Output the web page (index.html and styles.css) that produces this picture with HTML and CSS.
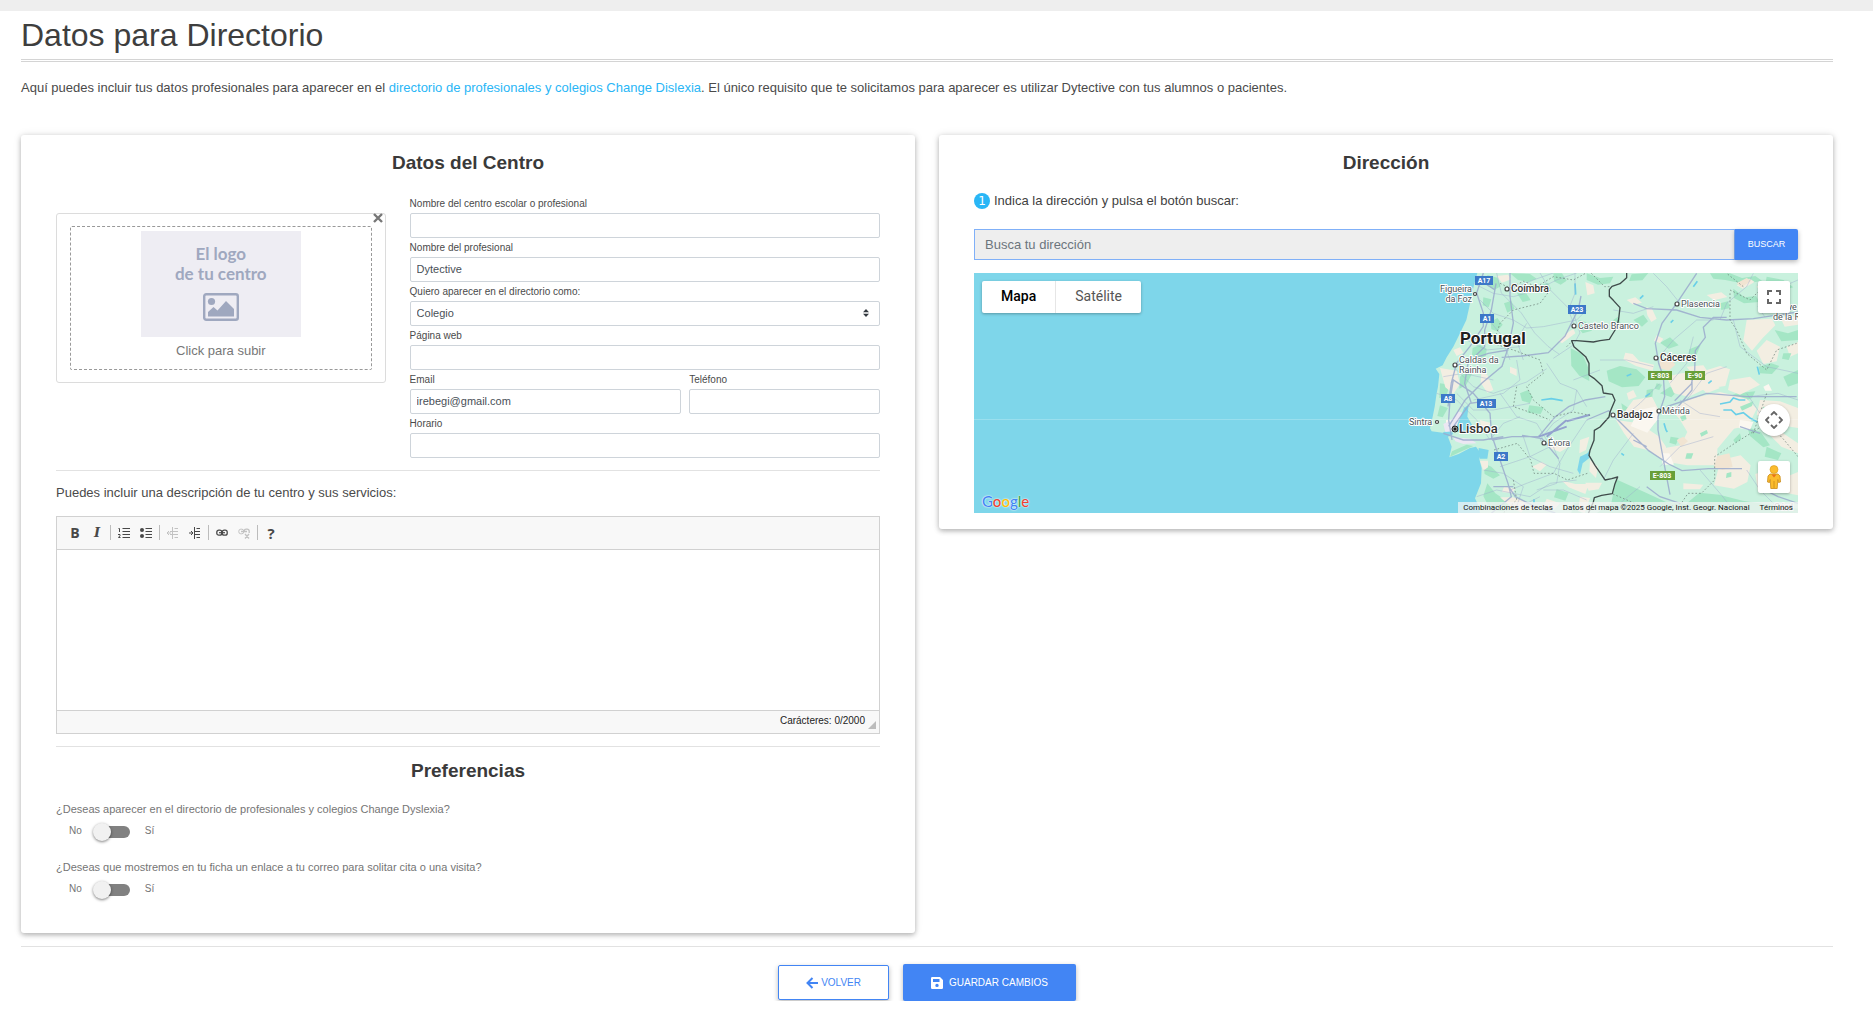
FILE: index.html
```html
<!DOCTYPE html>
<html lang="es">
<head>
<meta charset="utf-8">
<meta name="viewport" content="width=device-width, initial-scale=1">
<title>Datos para Directorio</title>
<link rel="stylesheet" href="styles.css">
</head>
<body>
<div class="topbar"></div>
<main class="page">
  <h1 class="page-title">Datos para Directorio</h1>
  <p class="intro">Aquí puedes incluir tus datos profesionales para aparecer en el <a href="#">directorio de profesionales y colegios Change Dislexia</a>. El único requisito que te solicitamos para aparecer es utilizar Dytective con tus alumnos o pacientes.</p>

  <div class="cards">
    <section class="card card-center">
      <h2 class="card-title">Datos del Centro</h2>
      <div class="center-grid">
        <div class="logo-box">
          <button type="button" class="logo-clear" aria-label="Quitar logo">
            <svg width="10" height="10" viewBox="0 0 10 10"><path d="M1 1l8 8M9 1l-8 8" stroke="#777" stroke-width="2.4"/></svg>
          </button>
          <button type="button" class="logo-drop">
            <span class="logo-image">
              <span>El logo</span>
              <span>de tu centro</span>
              <svg class="logo-icon" width="36" height="28" viewBox="0 0 36 28"><rect x="1.2" y="1.2" width="33.6" height="25.6" rx="2" fill="none" stroke="#9fa8bf" stroke-width="2.4"/><circle cx="8.5" cy="8.5" r="3.6" fill="#9fa8bf"/><path d="M5 23.500v-4.500l5.500-5 4 3.500L23 8l8 8v7.500z" fill="#9fa8bf"/></svg>
            </span>
            <span class="logo-text">Click para subir</span>
          </button>
        </div>
        <div class="fields">
          <div class="field"><label for="centro">Nombre del centro escolar o profesional</label><input id="centro" type="text"></div>
          <div class="field"><label for="profesional">Nombre del profesional</label><input id="profesional" type="text" value="Dytective"></div>
          <div class="field"><label for="tipo">Quiero aparecer en el directorio como:</label>
            <div class="select-wrap"><select id="tipo"><option>Colegio</option><option>Profesional</option></select>
            <svg class="select-arrow" width="6" height="8" viewBox="0 0 6 8"><path d="M0 3.200L3 0l3 3.200zM0 4.800L3 8l3-3.200z" fill="#343a40"/></svg></div></div>
          <div class="field"><label for="web">Página web</label><input id="web" type="text"></div>
          <div class="field-pair">
            <div class="field"><label for="email">Email</label><input id="email" type="text" value="irebegi@gmail.com"></div>
            <div class="field"><label for="telefono">Teléfono</label><input id="telefono" type="text"></div>
          </div>
          <div class="field"><label for="horario">Horario</label><input id="horario" type="text"></div>
        </div>
      </div>
      <hr>
      <label class="editor-label" for="descripcion">Puedes incluir una descripción de tu centro y sus servicios:</label>
      <div class="editor">
        <div class="toolbar">
          <button type="button" class="tool bold" aria-label="Negrita">B</button>
          <button type="button" class="tool italic" aria-label="Cursiva">I</button>
          <span class="sep"></span>
          <button type="button" class="tool" aria-label="Lista numerada"><svg width="12" height="12" viewBox="0 0 12 12" fill="none" stroke="#484848"><path d="M4.500 1.500H12M4.500 4.500H12M4.500 7.500H12M4.500 10.500H12" stroke-width="1"/><path d="M.5 1.500h1V5M0 7.500h2v1.200L.5 10.500H2.500"/></svg></button>
          <button type="button" class="tool" aria-label="Lista de viñetas"><svg width="12" height="12" viewBox="0 0 12 12"><circle cx="2" cy="3" r="2" fill="#484848"/><circle cx="2" cy="9" r="2" fill="#484848"/><path d="M5.500 1.500H12M5.500 4.500H12M5.500 7.500H12M5.500 10.500H12" stroke="#484848"/></svg></button>
          <span class="sep"></span>
          <button type="button" class="tool" disabled aria-label="Reducir sangría"><svg width="12" height="12" viewBox="0 0 12 12" fill="none" stroke="#484848"><path d="M5.500 0v12M7.500 1.500h3.500M3 4.500h8M3 7.500h8M7.500 10.500h3.500M0 6h4M2 4L0 6l2 2"/></svg></button>
          <button type="button" class="tool" aria-label="Aumentar sangría"><svg width="12" height="12" viewBox="0 0 12 12" fill="none" stroke="#484848"><path d="M5.500 0v12M7.500 1.500h3.500M6 4.500h5M6 7.500h5M7.500 10.500h3.500M0 6h4M2 4l2 2-2 2"/></svg></button>
          <span class="sep"></span>
          <button type="button" class="tool" aria-label="Insertar enlace"><svg width="12" height="8" viewBox="0 0 12 8" fill="none" stroke="#484848"><rect x=".8" y="1.200" width="5" height="5" rx="2" stroke-width="1.300"/><rect x="6.200" y="1.200" width="5" height="5" rx="2" stroke-width="1.300"/><path d="M3 3.700h6" stroke-width="1.200"/></svg></button>
          <button type="button" class="tool" disabled aria-label="Quitar enlace"><svg width="12" height="12" viewBox="0 0 12 12" fill="none" stroke="#484848"><rect x=".8" y="2.200" width="5" height="4.600" rx="2"/><path d="M6.200 5V4a2 2 0 0 1 2-1.800h1a2 2 0 0 1 2 2V6M3 4.500h6M7 7l4 4.500M11 7l-4 4.500" stroke-width="1.300"/></svg></button>
          <span class="sep"></span>
          <button type="button" class="tool help" aria-label="Ayuda">?</button>
        </div>
        <textarea id="descripcion"></textarea>
        <div class="editor-foot"><span>Carácteres: 0/2000</span><svg width="8" height="8" viewBox="0 0 8 8"><path d="M8 0v8H0z" fill="#bcbcbc"/></svg></div>
      </div>
      <hr>
      <h2 class="card-title">Preferencias</h2>
      <p class="question">¿Deseas aparecer en el directorio de profesionales y colegios Change Dyslexia?</p>
      <label class="switch"><span>No</span><input type="checkbox"><span>Sí</span></label>
      <p class="question">¿Deseas que mostremos en tu ficha un enlace a tu correo para solitar cita o una visita?</p>
      <label class="switch"><span>No</span><input type="checkbox"><span>Sí</span></label>
    </section>

    <section class="card card-address">
      <h2 class="card-title">Dirección</h2>
      <label class="step" for="direccion"><span class="step-number">1</span>Indica la dirección y pulsa el botón buscar:</label>
      <div class="search">
        <input id="direccion" type="text" placeholder="Busca tu dirección">
        <button type="button">BUSCAR</button>
      </div>
      <div class="map">
        <svg class="map-canvas" viewBox="0 0 824 240" preserveAspectRatio="xMaxYMid slice" role="img" aria-label="Mapa de Portugal">
          <rect width="824" height="240" fill="#7ed6ea"/>
          <g transform="translate(426 -53) scale(.33333)">
            <path fill="#c9f1de" d="M232 159L222 195 215 225 208 260 199 300 180 340 160 380 140 412 128 436 107 446 118 462 114 500 110 520 104 560 98 590 90 625 95 634 128 638 150 628 160 642 144 650 155 680 148 712 176 702 210 684 228 680 242 700 238 718 245 745 243 790 225 835 236 858 240 879H1194V159z"/>
            <g fill="#a4e6c5">
              <path d="M262 165l30 8 10 26-18 10-22-12zM330 160l60 2 20 14-26 10-30-6zM420 196l24-8 10 18-20 10zM250 232l24 6-8 24-18-6zM272 306l20-12 16 20-16 20-18-6zM218 384l22-10 20 12-2 22-24 10-18-14zM312 250l22-8 10 24-22 12zM180 470l22-20 14 12-18 34-20 10zM350 218l30 4 12 18-24 6zM460 160l26 0 14 22-18 12-20-10z"/>
              <path d="M512 385l36 18 18 44 2 36-30-16-24-30zM620 452l40-14 50 10 26 24-20 26-50 4-40-18zM560 160l40 14 40-4-10 20-36 4-34-14zM695 163l50-4-18 22-40 2zM700 300l30-16 14 20-18 16zM780 368l30-16 26 24-30 10zM640 300l14-10 10 26-20 10zM536 300l22 6 18 26-28 8-16-20zM868 388l34-14-14 34-24 4z"/>
              <path d="M930 160l60 0 36 14 40-6 20 14-50 10-60-12-36-4zM1000 206l34 26 34-4 10 18-46 4-30-16zM1100 170l50 10 30 22-40 12-44-22zM1124 330l40 10 30-10v30l-50 4zM1076 440l38-10 24 8-22 24-36-2zM960 250l24-6 6 20-26 6zM780 520l30-20 26 10-22 22zM1150 470l44-20v40l-30 10z"/>
              <path d="M648 778l40 18 50 22 60 28 60 6 40-34 60 6 70 18 90 14 76 10v13H590l44-30zM960 540l50-20 56-6-10 20-50 20-40 10zM360 520l24-10 14 20-8 20-24-8zM388 556l44 6-10 20-40-4zM250 730l24 10 26 26-20 10-26-14zM262 790l24 30 44 30-20 24-40-6-20-40zM470 808l36 10-10 24-34-10zM520 850l30-4-6 33h-30zM664 550l30 20 0 24-24-10zM812 650l24 4-8 20-20-6zM1042 620l40 16 28 40-20 6-40-34zM1100 680l44 20-10 20-40-10zM740 510l20-4-4 30-18 4zM156 694l44-20 20 4-40 18-30 14zM120 490l30 4-12 36-20 4zM120 556l24 8-16 28-16-4z"/>
            </g>
            <g fill="#f3eee2">
              <path d="M290 168l34-4 10 14-28 10zM556 186l24 10 4 24-22 6zM680 240l26-8 20 16-26 6zM738 262l18 4 14 30-16 10-12-20zM676 398l22 4 20 22 44 10-4 18-50-14-38-20zM770 346l20 10-10 14-18-8zM800 470l44-10 70-8 46-14 30 10-14 50-60 8-50 24-44-10zM860 440l50-4 14 20-44 10zM920 225l44-8 18 14-40 10zM1010 196l40-20 14 10-36 20zM1040 300l76-4 10 20-40 40-30 36-26-30zM1140 290l54 0v24l-40 6zM1100 360l40 20-10 44-40 8-20-40zM1160 380l34-14v34l-24 10zM990 480l60-10 30 24-60 30-36-14zM1070 200l20-14 8 20-16 6zM500 340l20-14 6 14-40 30-10-8zM160 390l20-8 10 16-20 10zM244 458l18 6 18 46-18 8-20-30zM330 440l20 8 0 20-20-10zM120 444l50 8 10 40-20 30-24-20z"/>
              <path d="M648 600l70 10 60 40 20 30-6 40-50-30-40-10-30-40zM700 540l56-10 20 40-10 40-60-14-30-24zM812 566l60-30 88-20 80 20 30 30-24 50-44 10-50 60 0 50-90 0-60-10-20-40 60-10 20-40-24-40zM900 500l40-10 20 14-40 16zM1080 540l60 4 54 20v60l-64-10-60-30zM962 720l60-14 30 30-10 50-40 20-60-10zM1066 762l44-16 60 20 24-10v70l-70-14-50 4zM1120 620l74 50v30l-50-20-40-40zM850 790l60 4-10 14-50 0zM240 722l24 0 0 20-14 10zM396 740l30-14 14 8-20 20zM440 680l24-8 40 10-24 14zM540 660l28-10-10 40-20 10zM486 782l40 10 40 0-10 30-50-20zM300 832l40 0 44 16-20 30-34-20zM440 836l40 14-20 20-30-10zM570 720l24 20-6 34-20-20zM680 520l20-10 10 20-24 10zM540 830l30 4-16 45-20-6zM556 788l50 0-10 20-30 4zM312 800l34 6-10 14-30-4zM240 600l30 8-4 20-24-8z"/>
            </g>
            <g fill="#f1e4d2"><path d="M780 420l30-6 16 20-20 18-28-8zM952 708l36-8 10 40-30 10-26-8zM830 660l20-10 14 14-20 16zM1010 190l30-16 14 8-30 20z"/></g>
            <g fill="#fbf7f0"><path d="M716 570l50-10 10 34-34 44-50-20zM784 700l24 0 14 34-34 0zM1090 500l16-8 10 20-20 0zM1020 600l40 6-10 24-34-6zM138 600l30 0 10 28-40 4zM1128 262l30 0 0 14-26 4z"/></g>
            <g fill="#a4e6c5"><path d="M840 590l16-6 4 14-14 6zM900 640l20-10 4 10-20 10zM1020 560l40-16-4 14-30 14zM770 490l16 4-8 16-14-4zM1000 660l20-20 4 16-18 14zM1150 400l24 0-8 20-20-4zM860 700l20 0-6 16-18 0zM980 760l14-4 0 14-16 4zM1090 560l30 4-10 14-24-6z"/></g>
            <g fill="#ece7f3"><path d="M130 612l24-12 20-26 12 4-10 26-16 30-24 2zM160 652l50 4 20 14-40 2-24-8z"/></g>
            <g fill="#7ed6ea">
              <path d="M172 614l12-30 8-20 14-10-4 36 14 24-2 16-30 8-18-6zM236 684l30 6-4 26-22 0-4-16zM532 750l8-40 22-10 8-12-2 26-20 16-8 34zM470 660l20 10-4 4z"/>
            </g>
            <path d="M424 540l30-4 34 6M525 190l2 34M960 552l30-6 10-12 18 6 18 0M970 570l24 0 14 14 22-6 20 16 22 12M1078 464l-6-24M792 610l6 20 4 6M880 200l12-16M820 300l-8 8M925 490l10-8M402 838l0 10M190 852l0 0M664 700l8 6M1084 800l0 8M680 468l14-6M736 530l14-10M730 226l-10 10M1150 245l12 10" fill="none" stroke="#69cfe8" stroke-width="5"/>
            <g fill="none" stroke="#9aa9cd" stroke-opacity=".5" stroke-width="2.500">
              <path d="M220 190l60 30 60 10 70-20 60-30 60-21M240 240l40 40 60 20 40 24 50-4 100-20 30-30M290 159l14 60 60 60 40 60 40 40 34 24M330 210l70-30 60-21M420 159l30 50 70 70 20 60-20 36-60 40M200 360l60 30 100-10M350 420l10 60-50 40-90 20M160 440l60 60 60 20 100-34 60-40M440 430l40 60 50 20 30 50M530 510l-10 60-60 40-40 50 40 20 20 50-10 60-60 20M110 520l60 20 60 60 40 60M300 520l50 70 60 20 30 50M520 480l80-30M280 480l-90-20-60 10M250 280l50 60 30 80M380 310l-30 50 20 60M170 520l50 50 60 0 110-20M270 660l40-50 50-20M370 650l20 60 60 30 70 20M560 600l-60 90-40 70-80 30-50 20M230 830l60-20 100 20 60-40 80-10M250 750l60 10 60 40-20 60M300 740l90-30 60-30M560 840l-70-30-60 0M360 860l60-30"/>
              <path d="M525 160v60l-20 50 20 50M600 420l80 0 80 20M760 260l-60 20-60-10M1060 160l-20 40-60 50-20 50M760 160l40 40 40 50M1194 180l-70 30-50 50 20 30M940 300l-50 0-70 60-50 60M1000 300l20 80 80 60 94 20M880 350l-20 80-50 60M660 600l60-50 60-60M840 540l60 40 60 10M1040 520l40 60 40 60M700 640l-60 80-30 60M780 740l60-60 100-30M860 540l60-80 60-20M1194 540l-60-20-90 10M900 750l60 70 40 50M1040 750l40 60 60 60M720 800l-60 50"/>
            </g>
            <g fill="none" stroke="#9aa9cd" stroke-opacity=".85" stroke-width="4">
              <path d="M250 159l-20 60 20 60 0 40-40 60-40 50-16 60-10 70M288 190l-14 80-20 60 0 50-50 50-10 60 20 60M330 159l0 70 10 80-14 70-20 60-60 50-50 50-50 80M305 412l60-4 80-10 50-50 40-80 8-40M276 660l60-10 80 0 50-60 40-30 50-20 60-10M130 640l60 20 60 0 60-10M276 660l-6-80-50-60-60-40-10 60-4 60 10 60M280 660l20 60 24 70 10 40-60 50M340 800l-60 0M326 800l20 30 60 30 60 19M366 646l60 10 50 60M225 170l30 20 30 20M165 440l40-20 60-20 60-10M160 620l50-70 70-10"/>
              <path d="M890 160l-60 90-44 60-20 60 10 60 14 40 4 60-20 60 0 40 20 110 16 84M700 250l40 16 90 4 70 22 80 8 80-4 134-20M980 292l-40 0-30 30 6 30-30 40-2 60-10 40-50 50M800 560l60-20 60-20 120 10 150 0M560 600l66-28 60 60 60 60 60 40 40 20 80-6 100 0M876 480l0 30-50 60M740 800l40 30 60 20M700 660l40 20M1080 640l-60-20M1194 850l-60-20-40-20"/>
            </g>
            <path d="M500 620L416 650M570 584l-70 20M500 600l-60 50" fill="none" stroke="#93a2ce" stroke-width="6"/>
            <g fill="none" stroke="#6b8079" stroke-opacity=".85" stroke-width="2.500" stroke-dasharray="5 6">
              <path d="M300 190l30 14 40-20 40 16 50-30 60 10 40-22M450 210l-30 40-80 20-40 40-20 60 60 20 80 30 10 40-50 40 20 40 60 50 60-14 50 10M350 500l-10 60 60 20 50 20M282 690l70-20 40 50 10 40 60 0 40 20 60-20M340 780l10 60-40 39M574 160l40 40 20 0M990 220v80l20 30 30 70 60 50 30-60 60-20M990 210l60 30 40-40 60 0M1194 710l-50-60-60-30-80 50-60 40 0 70-40 40-40 0-20 30-80 20-60-20-70-30M1030 200l-50-40M1060 640l40-120M500 380l20-20"/>
            </g>
            <path d="M680 159l0 14-20 18-24 8-8 10 0 20 12 12 20 22-4 34-5 24-15 24-8 13-28 4-20 4-50-4-15 0 7 18 23 20 12 10 10 20 0 35 15 10 24 22 4 22 27 4 8 18-15 35-3 15-27 30-17 10-1 30-12 30-3 15 18 30 30 44 20-4 18-5-8 20-8 30-32 5-22 7-3 13-15 34" fill="none" stroke="#3f4a4a" stroke-width="4" stroke-linejoin="round"/>
          </g>
          <path d="M0 146.500H824" stroke="#fff" stroke-opacity=".22"/>
          <g class="shields">
            <g fill="#3c78c8"><rect x="501" y="3" width="18" height="9"/><rect x="506" y="41" width="14" height="9"/><rect x="594" y="32" width="18" height="9"/><rect x="467" y="121" width="14" height="9"/><rect x="503" y="126" width="19" height="9"/><rect x="520" y="179" width="14" height="9"/></g>
            <g fill="#689f38"><rect x="674" y="98" width="24" height="9"/><rect x="711" y="98" width="20" height="9"/><rect x="676" y="198" width="25" height="9"/></g>
            <text x="510" y="10">A17</text><text x="513" y="48">A1</text><text x="603" y="39">A23</text><text x="474" y="128">A8</text><text x="512" y="133">A13</text><text x="527" y="186">A2</text><text x="686" y="105">E-803</text><text x="721" y="105">E-90</text><text x="688" y="205">E-803</text>
          </g>
          <g fill="#fff" stroke="#444" stroke-width="1.200"><circle cx="533" cy="16" r="2"/><circle cx="501" cy="21" r="1.500"/><circle cx="600" cy="53" r="2"/><circle cx="703" cy="31" r="2"/><circle cx="481" cy="92" r="2"/><circle cx="682" cy="85" r="2"/><circle cx="639" cy="142" r="2"/><circle cx="685" cy="138" r="2"/><circle cx="570" cy="170" r="2"/><circle cx="463" cy="149" r="1.500"/></g>
          <circle cx="481" cy="156" r="3" fill="#222" stroke="#222" stroke-width="1"/><circle cx="481" cy="156" r="2" fill="none" stroke="#fff" stroke-width=".6"/>
          <g class="places">
            <text x="498" y="19" text-anchor="end">Figueira</text><text x="498" y="29" text-anchor="end">da Foz</text>
            <text x="485" y="90">Caldas da</text><text x="485" y="100">Rainha</text>
            <text x="604" y="56">Castelo Branco</text><text x="707" y="34">Plasencia</text>
            <text x="688" y="141">Mérida</text><text x="574" y="173">Évora</text><text x="435" y="152">Sintra</text>
            <text x="797" y="37">Talave</text><text x="799" y="47">de la Reina</text>
            <text x="800" y="237" fill="#999">Córd</text>
            <g class="city"><text x="537" y="19">Coímbra</text><text x="686" y="88">Cáceres</text><text x="643" y="145">Badajoz</text></g>
            <text class="capital" x="485" y="160">Lisboa</text>
            <text class="country" x="486" y="71">Portugal</text>
          </g>
        </svg>
        <div class="map-types"><button type="button" class="active">Mapa</button><button type="button">Satélite</button></div>
        <div class="map-controls">
          <button type="button" class="map-button" aria-label="Pantalla completa"><svg width="14" height="14" viewBox="0 0 14 14"><path d="M1 5V1h4M9 1h4v4M13 9v4H9M5 13H1V9" fill="none" stroke="#666" stroke-width="2"/></svg></button>
          <button type="button" class="map-button round" aria-label="Mover el mapa"><svg width="18" height="18" viewBox="0 0 18 18"><path d="M6 4l3-3 3 3M6 14l3 3 3-3M4 6L1 9l3 3M14 6l3 3-3 3" fill="none" stroke="#666" stroke-width="1.800"/></svg></button>
          <button type="button" class="map-button" aria-label="Street View"><svg width="14" height="24" viewBox="0 0 14 24"><path d="M3 9h8l2 2 .5 6-2 .5-.7-3-.6 9H3.800l-.6-9-.7 3-2-.5L1 11z" fill="#fbbc2c" stroke="#c98b1b" stroke-width=".8"/><path d="M4.500 9.500h5L7 12.500z" fill="#e8711a"/><circle cx="7" cy="4.500" r="4" fill="#fbbc2c" stroke="#d59a1f" stroke-width=".6"/><path d="M7 16v7" stroke="#c98b1b" stroke-width=".8"/></svg></button>
        </div>
        <a class="google" href="#" aria-label="Google"><span class="g-blue">G</span><span class="g-red">o</span><span class="g-yellow">o</span><span class="g-blue">g</span><span class="g-green">l</span><span class="g-red">e</span></a>
        <div class="map-legal"><button type="button">Combinaciones de teclas</button><span>Datos del mapa ©2025 Google, Inst. Geogr. Nacional</span><a href="#">Términos</a></div>
      </div>
    </section>
  </div>

  <footer class="actions">
    <button type="button" class="btn btn-outline"><svg width="12" height="12" viewBox="0 0 12 12"><path d="M6.500 1L1.500 6l5 5M2 6h10" fill="none" stroke="#4285f4" stroke-width="2"/></svg>VOLVER</button>
    <button type="button" class="btn btn-primary"><svg width="12" height="12" viewBox="0 0 12 12"><path fill="#fff" fill-rule="evenodd" d="M1.200 0H9l3 3v7.800a1.200 1.200 0 0 1-1.200 1.200H1.200A1.200 1.200 0 0 1 0 10.800V1.200A1.200 1.200 0 0 1 1.200 0zM2 2v3h6.500V2zM6 6.700a1.700 1.700 0 1 0 0 3.400 1.700 1.700 0 0 0 0-3.400z"/></svg>GUARDAR CAMBIOS</button>
  </footer>
</main>
</body>
</html>
```
FILE: styles.css
```css
* { box-sizing: border-box; }
body {
  margin: 0;
  background: #fff;
  color: #4a4a4a;
  font: 13px/20px "Liberation Sans", Arial, sans-serif;
}
button, input, select, textarea { font-family: inherit; margin: 0; }
button { cursor: pointer; border: 0; padding: 0; }
a { color: #29b6f6; text-decoration: none; }
svg { display: block; flex: none; }
h1, h2, p { margin: 0; }
hr { border: 0; border-top: 1px solid #e2e2e2; margin: 12px 0; }

.topbar { height: 11px; background: #eee; }
.page { padding: 5px 40px 0 21px; }
.page-title {
  font-size: 32px;
  line-height: 38px;
  font-weight: 400;
  color: #3e3e3e;
  padding-bottom: 5px;
  border-bottom: 3px double #d4d4d4;
}
.intro { margin: 16px 0 37px; }

.cards {
  display: grid;
  grid-template-columns: 1fr 1fr;
  gap: 24px;
  align-items: start;
}
.card {
  border-radius: 3px;
  box-shadow: 0 2px 5px rgba(0, 0, 0, .26), 0 0 8px rgba(0, 0, 0, .1);
  padding: 16px 35px;
  min-width: 0;
}
.card-center { padding-bottom: 33px; }
.card-title {
  font-size: 19px;
  line-height: 24px;
  color: #3a3a3a;
  text-align: center;
  margin-bottom: 16px;
}

/* Logo and form fields */
.center-grid {
  display: grid;
  grid-template-columns: 40% 1fr;
  column-gap: 24px;
  padding-top: 3px;
  align-items: start;
}
.logo-box {
  position: relative;
  margin-top: 19px;
  padding: 12px 13px;
  border: 1px solid #dcdcdc;
  border-radius: 3px;
}
.logo-clear {
  position: absolute;
  top: -1px;
  right: 2px;
  padding: 0;
  background: none;
}
.logo-drop {
  display: flex;
  flex-direction: column;
  align-items: center;
  width: 100%;
  padding: 4px 0 8px;
  background: none;
  border: 1px dashed #999;
  border-radius: 2px;
}
.logo-image {
  display: flex;
  flex-direction: column;
  align-items: center;
  width: 160px;
  padding: 13px 0 16px;
  background: #eeedf3;
  color: #9fa8bf;
  font: 700 17px/20px Lato, sans-serif;
}
.logo-icon { margin-top: 9px; }
.logo-text { margin-top: 4px; font-size: 13px; line-height: 20px; color: #777; }

.field { padding-top: 2px; }
.field label { display: block; font-size: 10px; line-height: 15px; margin-bottom: 2px; }
.field input, .field select {
  display: block;
  width: 100%;
  height: 25px;
  padding: 0 6px 1px;
  border: 1px solid #ced4da;
  border-radius: 2px;
  background: #fff;
  color: #495057;
  font-size: 11px;
}
.field select { appearance: none; }
.select-wrap { position: relative; }
.select-arrow { position: absolute; right: 11px; top: 8px; pointer-events: none; }
.field-pair { display: grid; grid-template-columns: 272fr 191fr; gap: 8px; }

/* Rich text editor */
.editor-label { display: block; margin-bottom: 13px; }
.editor { border: 1px solid #d1d1d1; }
.toolbar {
  display: flex;
  align-items: center;
  height: 33px;
  padding: 0 7px 1px;
  background: #f8f8f8;
  border-bottom: 1px solid #d1d1d1;
}
.tool {
  display: flex;
  align-items: center;
  justify-content: center;
  width: 22px;
  height: 22px;
  background: none;
  color: #484848;
  font: 700 14px/22px "Open Sans", sans-serif;
}
.tool:disabled { opacity: .3; }
.italic { font-family: "DejaVu Serif", serif; font-size: 13px; font-style: italic; }
.help { font-size: 15px; }
.sep { width: 1px; height: 15px; margin: 0 2px; background: #bcbcbc; }
.editor textarea { display: block; width: 100%; height: 160px; border: 0; padding: 8px; resize: none; }
.editor-foot {
  display: flex;
  justify-content: flex-end;
  gap: 3px;
  height: 23px;
  padding: 0 3px;
  border-top: 1px solid #d1d1d1;
  background: #f8f8f8;
  color: #222;
  font-size: 10px;
  line-height: 20px;
}
.editor-foot svg { align-self: flex-end; margin-bottom: 4px; }

/* Preferences */
.question { font-size: 11px; line-height: 16px; color: #757575; padding-top: 2px; }
.switch + .question { margin-top: 15px; }
.switch {
  display: flex;
  width: max-content;
  height: 20px;
  margin-top: 5px;
  padding-left: 13px;
  color: #757575;
  font-size: 10px;
  line-height: 17px;
}
.switch input {
  appearance: none;
  position: relative;
  width: 34px;
  height: 12px;
  margin: 4px 15px 0 14px;
  border-radius: 6px;
  background: #818181;
}
.switch input::before {
  content: "";
  position: absolute;
  left: -3px;
  top: -3px;
  width: 18px;
  height: 18px;
  border-radius: 50%;
  background: #f1f1f1;
  box-shadow: 0 1px 3px rgba(0, 0, 0, .5);
}
.switch input:checked::before { left: 19px; }

/* Address */
.step { display: flex; align-items: center; gap: 4px; color: #3f3f3f; }
.step-number {
  width: 16px;
  height: 16px;
  border-radius: 50%;
  background: #29b6f6;
  color: #fff;
  font: 12px/16px "DejaVu Sans", sans-serif;
  text-align: center;
}
.search { display: flex; margin: 18px 0 13px; }
.search input {
  flex: 1;
  min-width: 0;
  height: 31px;
  padding: 0 10px;
  border: 1px solid #80b0f8;
  background: #eee;
  color: #495057;
  font-size: 13px;
}
.search input::placeholder { color: #6c757d; opacity: 1; }
.search button {
  width: 63px;
  padding-bottom: 1px;
  background: #4285f4;
  color: #fff;
  border-radius: 0 2px 2px 0;
  font-size: 9px;
  box-shadow: 0 2px 5px rgba(0, 0, 0, .28);
}

.map { position: relative; height: 240px; overflow: hidden; background: #7ed6ea; font-family: Roboto, sans-serif; }
.map-canvas { width: 100%; height: 100%; }
.shields text { fill: #fff; font: 700 7px Roboto, sans-serif; text-anchor: middle; }
.places { fill: #4a5257; stroke: #fff; stroke-width: 2px; stroke-linejoin: round; paint-order: stroke; font-size: 9px; }
.city { font-size: 10px; font-weight: 500; fill: #333; }
.capital { font-size: 13px; font-weight: 500; fill: #333; }
.country { font-size: 17px; font-weight: 700; fill: #202020; }
.map-types {
  position: absolute;
  left: 8px;
  top: 8px;
  display: flex;
  height: 32px;
  background: #fff;
  border-radius: 2px;
  box-shadow: 0 1px 3px rgba(0, 0, 0, .3);
}
.map-types button { padding: 0 19px 2px; background: none; color: #565656; font-size: 14px; }
.map-types .active { color: #000; font-weight: 500; border-right: 1px solid #e6e6e6; }
.map-controls {
  position: absolute;
  top: 8px;
  right: 8px;
  bottom: 20px;
  display: flex;
  flex-direction: column;
  gap: 25px;
}
.map-button {
  display: flex;
  align-items: center;
  justify-content: center;
  width: 32px;
  height: 32px;
  background: #fff;
  border-radius: 2px;
  box-shadow: 0 1px 3px rgba(0, 0, 0, .3);
}
.map-button.round { border-radius: 50%; margin-top: auto; }
.google {
  position: absolute;
  left: 8px;
  bottom: 2px;
  font: 500 15px/20px Lato, sans-serif;
  text-shadow: 0 0 1px #fff, 0 0 2px #fff;
}
.g-blue { color: #4285f4; }
.g-red { color: #ea4335; }
.g-yellow { color: #fbbc04; }
.g-green { color: #34a853; }
.map-legal {
  position: absolute;
  right: 0;
  bottom: 0;
  display: flex;
  color: #111;
  font-size: 8px;
  line-height: 11px;
}
.map-legal > * { padding: 0 5px; background: rgba(245, 245, 245, .72); color: inherit; font: inherit; }

/* Page actions */
.actions {
  display: flex;
  justify-content: center;
  align-items: center;
  gap: 14px;
  margin-top: 13px;
  padding-top: 17px;
  border-top: 1px solid #e2e2e2;
}
.btn {
  display: flex;
  align-items: center;
  font-size: 10px;
  border-radius: 2px;
  box-shadow: 0 2px 5px rgba(0, 0, 0, .28);
}
.btn-outline { height: 35px; padding: 0 27px; gap: 3px; border: 1px solid #4285f4; background: #fff; color: #4285f4; }
.btn-primary { height: 37px; padding: 0 28px; gap: 6px; background: #4285f4; color: #fff; }
```
